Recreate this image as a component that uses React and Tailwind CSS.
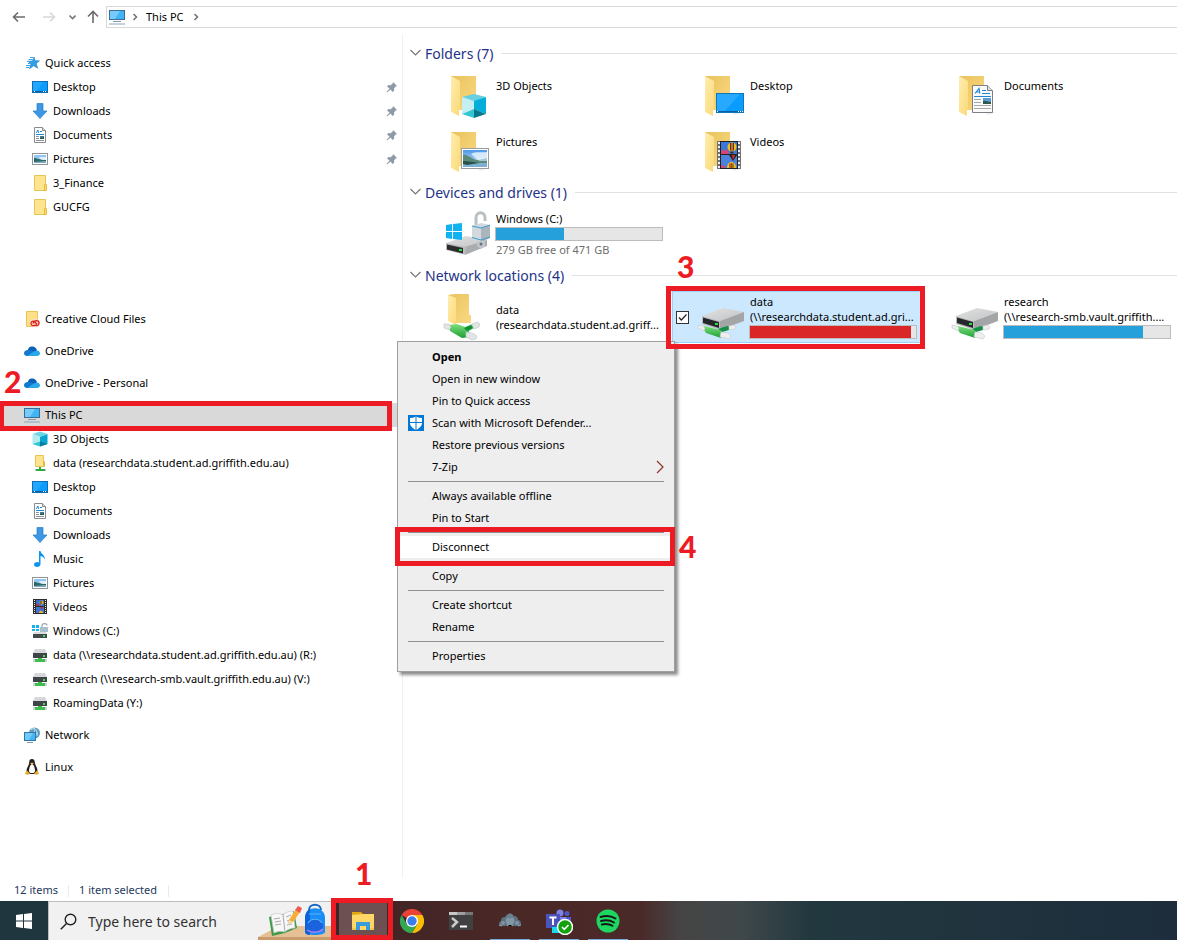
import { useState } from "react";
import clsx from "clsx";

/* -------------------- Small icons (16px) -------------------- */
const Small = ({ children }) => (
  <svg width="16" height="16" viewBox="0 0 16 16" className="shrink-0" aria-hidden="true">
    {children}
  </svg>
);

const StarIcon = () => (
  <Small>
    <path d="M10 2l1.200 3.800h4.300l-3.300 2.700 1.400 4.700-3.900-2.400-4.200 3 1.600-5L4 6.400l4.500-.5z" fill="#2f9fe8" stroke="#1b7fc4" strokeWidth=".6" />
    <path d="M6 2.500h3M4.500 4.500h4M3 6.500h2M4 8.500h3M2 10.500h4M2 12.500h3" stroke="#3aa5ea" />
  </Small>
);

const DesktopIcon = () => (
  <Small>
    <rect x=".5" y="2.500" width="15" height="11" fill="#0a9cff" stroke="#0f6fb5" />
    <path d="M1 3h10L5 12H1z" fill="#35b0ff" opacity=".6" />
    <path d="M1 12.500h14" stroke="#0b5fa0" />
    <path d="M2 12.500h1M11 12.500h1M13 12.500h1" stroke="#fff" />
  </Small>
);

const DownloadIcon = () => (
  <Small>
    <path d="M5 .5h6v7.500h4L8 15.500 1 8h4z" fill="#3c97e4" stroke="#2a7cc4" strokeWidth=".7" />
  </Small>
);

const DocumentIcon = () => (
  <Small>
    <path d="M2.500.5h8l3 3v12h-11z" fill="#fff" stroke="#868b90" />
    <path d="M10.500.5v3h3" fill="#ddd" stroke="#868b90" />
    <path d="M4 6L6 3l.5 3M8 4.500h2M4 7.500h8" stroke="#1f8ad2" fill="none" />
    <path d="M4 9.500h3M4 11.500h3M4 13.500h8" stroke="#8f9499" />
    <rect x="8" y="9" width="4" height="3" fill="#3e78a8" />
    <path d="M8 12v-1l4-1v2z" fill="#325b48" />
  </Small>
);

const PictureIcon = () => (
  <Small>
    <rect x=".5" y="2.500" width="15" height="11" fill="#fff" stroke="#8f9499" />
    <rect x="2" y="4" width="12" height="8" fill="#8fc6f5" />
    <path d="M7 6h7v3H9z" fill="#dff0fb" />
    <path d="M2 7c3 0 5 2 12 2v2H2z" fill="#2e6a64" />
    <path d="M2 11l12-1v2H2z" fill="#7fa9c9" />
  </Small>
);

const FolderIcon = () => (
  <Small>
    <path d="M2.500.5h11v15h-11z" fill="#ffe48f" stroke="#e8c552" />
    <path d="M12.500 9.500h2v6h-2z" fill="#ffdf7d" stroke="#e3bb3f" />
  </Small>
);

const CreativeCloudIcon = () => (
  <Small>
    <path d="M2.500.5h11v15h-11z" fill="#ffe08a" stroke="#e8c552" />
    <rect x="6" y="8" width="10" height="8" rx="4" fill="#fbd9c5" />
    <path d="M11 14c-1 1-4 1-4-1.500S9.500 9.500 11 11l2 2.500M9 12.500c1.500-4 6-3.500 6-.5s-3 3-4 2" fill="none" stroke="#d8201b" strokeWidth="1.300" />
  </Small>
);

const OneDriveIcon = () => (
  <Small>
    <path d="M4 8c-.5-3 2-5 5-4.500 2 .3 3.500 2 4 4L9 11z" fill="#0b5fb4" />
    <path d="M3.500 7C1.500 7 0 8.500 0 10.300S1.500 13 3 13h4l5-4.500C8 8 7 6.500 3.500 7z" fill="#1279d2" />
    <path d="M3 13l7-4.500c4-2.500 6 0 6 1.800S14.500 13 13 13z" fill="#28a8ea" />
  </Small>
);

const PcIcon = () => (
  <Small>
    <rect x=".5" y="1.500" width="15" height="9" fill="#41b4f8" stroke="#3b6d93" />
    <path d="M1 2h10l-5 8H1z" fill="#8ad4fd" opacity=".7" />
    <path d="M4 12.500h8" stroke="#8397ad" />
    <path d="M0 15h16" stroke="#8ea4bf" />
  </Small>
);

const CubeIcon = () => (
  <Small>
    <path d="M8 .5L15.500 3 8 6 .5 3z" fill="#6fd6e4" />
    <path d="M.5 3L8 6v9.500L.5 13z" fill="#b6ecf1" />
    <path d="M15.500 3L8 6v9.500l7.500-2.500z" fill="#06a8d2" />
    <path d="M.5 13L8 10.500v5z" fill="#35c5d4" />
    <path d="M15.500 13L8 10.500v5z" fill="#0b7f99" />
  </Small>
);

const NetFolderIcon = () => (
  <Small>
    <path d="M3.500.5h8v11h-8z" fill="#ffe48f" stroke="#e8c552" />
    <path d="M11.500 6.500h1v5h-1z" stroke="#e3bb3f" fill="none" />
    <path d="M8 12v3M4 15h9" stroke="#2bab3a" strokeWidth="2" />
    <path d="M3 15h1M13 15h1" stroke="#c9c9c9" strokeWidth="2" />
  </Small>
);

const MusicIcon = () => (
  <Small>
    <path d="M7 0h1.500c.5 3 4.500 3.500 4.300 8.500-.8-2-2-3-4.300-3.500v8c0 1.800-1.500 3-3.500 3S2 15 2 13.500 3.500 11 5 11c.8 0 1.500.2 2 .5z" fill="#0c95ee" />
  </Small>
);

const VideoIcon = () => (
  <Small>
    <rect x="1" width="14" height="15" fill="#2d2d2d" />
    <path d="M2.500 1v14M13.500 1v14" stroke="#e8e8e8" strokeDasharray="1 1" />
    <rect x="4" y="1" width="8" height="6" fill="#3b6fd0" />
    <rect x="4" y="8" width="8" height="6" fill="#3f74d4" />
    <circle cx="9.500" cy="3.500" r="2" fill="#e8b21a" />
    <path d="M4 5h3v2H4zM8 8h3l-1 3z" fill="#b8352e" />
    <path d="M7 14c0-3 4-3 4 0z" fill="#f0b420" />
    <path d="M9 2v3" stroke="#3a2a10" />
  </Small>
);

const LockedDriveIcon = () => (
  <Small>
    <path d="M0 2h3v3H0zM4 2h3v3H4zM0 6h3v2H0zM4 6h3v2H4z" fill="#17b0ee" />
    <path d="M10 4.500V2.500c0-2.500 5-2.500 5 0" fill="none" stroke="#9ea6ac" strokeWidth="1.200" />
    <rect x="8" y="4" width="8" height="5" fill="#a8c0d0" />
    <path d="M2 9h12l1 2H1z" fill="#dcdcdc" />
    <rect x="1" y="11" width="14" height="4" fill="#43494d" />
    <rect x="11" y="12" width="2" height="2" fill="#35e04b" />
  </Small>
);

const NetDriveIcon = () => (
  <Small>
    <path d="M3 2h10l2 4H1z" fill="#d6d8da" />
    <rect x="1" y="6" width="14" height="5" fill="#3e4448" />
    <rect x="11" y="8" width="2" height="2" fill="#35e04b" />
    <path d="M6 11h4v1h3v3H3v-3h3z" fill="#3ebd4c" />
    <path d="M1 12h2v3H1zM13 12h2v3h-2z" fill="#d0d3d5" />
  </Small>
);

const NetworkIcon = () => (
  <Small>
    <circle cx="10.500" cy="6" r="5.500" fill="#5c9dbf" />
    <path d="M7 3c3-3 5 0 3 2s2 3 4 1M10 1c3 2 3 4 3 8" stroke="#c6e3ee" fill="none" />
    <rect x=".5" y="5.500" width="11" height="8" fill="#43b5f6" stroke="#2d77a9" />
    <path d="M1 6h8l-4 7H1z" fill="#93d8fd" opacity=".6" />
    <path d="M3 15.500h6" stroke="#8397ad" />
  </Small>
);

const LinuxIcon = () => (
  <Small>
    <path d="M8 0c2 0 2.800 1.500 2.800 3.500 0 2 2.700 5 2.700 8S11 15 8 15s-5.500-1-5.500-3.500 2.700-5.500 2.700-8S6 0 8 0z" fill="#222" />
    <path d="M8 5c1.500 0 3 4.500 3 6.500S10 14 8 14s-3-.5-3-2.500S6.500 5 8 5z" fill="#fff" />
    <path d="M6 4.300l2-.8 2 .8-2 1.200z" fill="#e9b23a" />
    <path d="M1 15l1.500-4 3 3c.5 2-2 2-4.500 1zM15 15l-1.500-4-3 3c-.5 2 2 2 4.500 1z" fill="#e6ab2c" />
  </Small>
);

const PinIcon = () => (
  <svg width="12" height="12" viewBox="0 0 12 12" className="shrink-0" aria-hidden="true">
    <path d="M7 1l4 4-1.300.5-1.700 2 .3 2L6.500 11 4.500 8.500 1 11.500l-.5-.5L3.500 7.500 1 5.500 2.500 4l2 .2L6.700 2.500z" fill="#8e9aa5" />
  </svg>
);

/* -------------------- Large icons (48px) -------------------- */
const Large = ({ children }) => (
  <svg width="48" height="48" viewBox="0 0 48 48" className="shrink-0 overflow-visible" aria-hidden="true">
    <defs>
      <linearGradient id="folderBack" x1="0" y1="0" x2="1" y2="1">
        <stop offset="0" stopColor="#e8c35c" />
        <stop offset="1" stopColor="#fbd983" />
      </linearGradient>
      <linearGradient id="folderFront" x1="0" y1="0" x2="1" y2="1">
        <stop offset="0" stopColor="#ffeeb0" />
        <stop offset="1" stopColor="#fbd976" />
      </linearGradient>
      <linearGradient id="driveTop" x1="0" y1="0" x2="1" y2="1">
        <stop offset="0" stopColor="#e2e2e2" />
        <stop offset="1" stopColor="#c2c3c5" />
      </linearGradient>
      <linearGradient id="plug" x1="0" y1="0" x2="0" y2="1">
        <stop offset="0" stopColor="#7be07c" />
        <stop offset="1" stopColor="#1d9e35" />
      </linearGradient>
      <linearGradient id="sky" x1="0" y1="0" x2="0" y2="1">
        <stop offset="0" stopColor="#4b97ea" />
        <stop offset="1" stopColor="#e4f4fd" />
      </linearGradient>
    </defs>
    {children}
  </svg>
);

const OpenFolder = ({ children }) => (
  <Large>
    <path d="M34 42l11-1-9 3z" fill="#ededed" />
    <path d="M7 5h25v34H15z" fill="url(#folderBack)" />
    <path d="M7 5l9 5v28l-1 1v6l-8-4z" fill="url(#folderFront)" />
    {children}
  </Large>
);

const Folder3d = () => (
  <OpenFolder>
    <path d="M30 23l12 3-12 5-12-5z" fill="#67d0e0" />
    <path d="M18 26l12 4v8l-12 5z" fill="#c4eff3" />
    <path d="M42 26l-12 4v8l12 5z" fill="#04aedb" />
    <path d="M18 43l12-5v9z" fill="#35c5d4" />
    <path d="M42 43l-12-5v9z" fill="#08788c" />
  </OpenFolder>
);

const FolderDesktop = () => (
  <OpenFolder>
    <rect x="18.500" y="22.500" width="27" height="19" fill="#0a9cff" stroke="#1275b8" />
    <path d="M19 23h23L27 40h-8z" fill="#39b2ff" opacity=".6" />
    <path d="M19 40.500h26" stroke="#0b5fa0" />
    <path d="M19 40.500h1M40 40.500h1M42 40.500h1M44 40.500h1" stroke="#fff" />
  </OpenFolder>
);

const FolderDocuments = () => (
  <OpenFolder>
    <path d="M20.500 14.500h15l5 5v22h-20z" fill="#fafafa" stroke="#7c8084" />
    <path d="M35.500 14.500v5h5" fill="#ddd" stroke="#7c8084" />
    <path d="M23 22.500l4-5 .8 5M24.500 21h3.500M30 19.500h4M30 22.500h8" stroke="#2188cf" fill="none" strokeWidth="1.200" />
    <path d="M22 25.500h17" stroke="#2188cf" />
    <path d="M22 28.500h7M22 31.500h7M22 34.500h17M22 37.500h17" stroke="#a5a8ab" />
    <rect x="31" y="27" width="8" height="6" fill="#5b9bd8" />
    <path d="M31 30c3-1 5 1 8 1v2h-8z" fill="#30574b" />
  </OpenFolder>
);

const FolderPictures = () => (
  <OpenFolder>
    <rect x="17.500" y="21.500" width="27" height="20" fill="#fff" stroke="#9a9da0" />
    <rect x="19" y="23" width="24" height="17" fill="url(#sky)" />
    <path d="M27 27c5-3 10-1 16-2v7l-9 1z" fill="#eef7fd" opacity=".8" />
    <path d="M19 28c5-1 8 4 14 5 4 1 7 0 10 1v2H19z" fill="#5b8b78" />
    <path d="M35 33l8-2v3h-8z" fill="#a9c6d6" />
    <path d="M19 36h24v4H19z" fill="#7fb0d2" />
    <path d="M19 34c6 0 10 1 16 2l-12 2-4-1z" fill="#28504a" />
  </OpenFolder>
);

const FolderVideos = () => (
  <OpenFolder>
    <rect x="19" y="14" width="24" height="28" fill="#737373" />
    <path d="M21 15v27M41 15v27" stroke="#f0f0f0" strokeWidth="2" strokeDasharray="2 2" />
    <rect x="22" y="14" width="18" height="28" fill="#222" />
    <rect x="23" y="15" width="16" height="12" fill="#3d78d8" />
    <rect x="23" y="28" width="16" height="13" fill="#4a82dc" />
    <circle cx="34" cy="20" r="4.500" fill="#f0c022" />
    <path d="M32.500 16v7.500M35.500 16v7.500" stroke="#3b2a1a" strokeWidth=".9" />
    <path d="M34 16v8" stroke="#c8312b" strokeWidth="1.200" />
    <path d="M32.500 24.500h3v2h-3z" fill="#3b2a1a" />
    <path d="M23 25l2-3 2 2 2-2 2 4v1h-8z" fill="#d34678" />
    <path d="M31 28h8l-4 6z" fill="#2b2320" />
    <path d="M34 28h3l-2 5z" fill="#d62d30" />
    <path d="M29 41c0-8 9-8 9 0z" fill="#f0c022" />
    <path d="M32 36.500V41M35 36.500V41" stroke="#3b2a1a" strokeWidth=".9" />
    <path d="M33.500 36v5" stroke="#c8312b" strokeWidth="1.200" />
    <path d="M23 38l4 1v2h-4z" fill="#d34678" />
  </OpenFolder>
);

const WindowsDrive = () => (
  <Large>
    <path d="M2 33l20-7 21 4-20 8z" fill="url(#driveTop)" />
    <path d="M21 37l22-7v6L21 45z" fill="#aaadb0" />
    <path d="M2 33l20 4v8L2 40z" fill="#b9babc" />
    <path d="M3 34.500L19 38v5.500L3 39.500z" fill="#2a2c2e" />
    <rect x="15" y="39" width="3" height="2" fill="#31d83e" />
    <path d="M2 15l6-1v7H2zM9 14l9-1v8H9zM2 22h6v7l-6-1zM9 22h9v8l-9-1z" fill="#12b2f2" />
    <path d="M32 17V8c0-7 9-7 9 0v3" fill="none" stroke="#b9c0c4" strokeWidth="3" />
    <path d="M28 16l9-3 9 2v13l-9 4-9-3z" fill="#d2d8dc" />
    <path d="M37 18v14l9-4V15z" fill="#abb5bc" />
    <path d="M28 16l9 2 9-3M28 27.500l9 2.500 9-3" stroke="#3d9bd0" fill="none" />
    <path d="M33 31h8v5l-4 3-4-3z" fill="#c0c6ca" />
    <circle cx="37" cy="34" r="1.500" fill="#6a7277" />
  </Large>
);

const NetFolder = () => (
  <Large>
    <path d="M4 2l6-1h15v20l2 2v7H10z" fill="url(#folderBack)" />
    <path d="M4 2l8 3v27l-8-4z" fill="url(#folderFront)" />
    <path d="M5 32l8-1 8 3 7-3 2 4-5 3v6l-7 1-12-7z" fill="url(#plug)" />
    <path d="M20 35l7-3 2 3-6 3z" fill="#0f8f36" />
    <path d="M0 31l5 0 2 3-2 3-5-2zM28 31l5-2 3 2-1 3-5 2zM22 39l6 1 5 3-1 3-4 1-6-3z" fill="#e2e5e6" stroke="#bfc2c4" strokeWidth=".6" />
  </Large>
);

const NetDrive = () => (
  <Large>
    <path d="M4 23l21-8 21 4-24 9z" fill="url(#driveTop)" />
    <path d="M22 28l24-9v9L22 37z" fill="#a4a5a7" />
    <path d="M4 23l18 5v9L4 31z" fill="#bbbcbe" />
    <path d="M5 24.500L21 29v6L5 30z" fill="#25282a" />
    <rect x="17" y="30" width="3" height="2" fill="#31d83e" />
    <path d="M20 36l9-3 4 1-2 3-7 2z" fill="#158f45" />
    <path d="M6 33l16 4 2 2-1 6-15-5-2-3z" fill="url(#plug)" />
    <path d="M0 32l5 1 2 2-1 3-6-3zM31 33l5-1 2 2-1 2-6 1zM23 39l7 1 3 3-2 3-9-2z" fill="#eceeef" stroke="#c6c9ca" strokeWidth=".6" />
  </Large>
);

/* -------------------- Taskbar icons -------------------- */
const ExplorerIcon = () => (
  <svg width="24" height="24" viewBox="0 0 24 24" aria-hidden="true">
    <path d="M1 3h9l2 2v3H1z" fill="#e2a60f" />
    <path d="M1 6l11-1h11v16H1z" fill="#ffd766" />
    <path d="M5 13h14v8h-4v-4H9v4H5z" fill="#3a9bdd" />
    <path d="M1 19h4v2H1zM19 19h4v2h-4z" fill="#f4c650" />
  </svg>
);

const ChromeIcon = () => (
  <svg width="24" height="24" viewBox="0 0 24 24" aria-hidden="true">
    <path d="M12 12L1.600 6A12 12 0 0 1 22.400 6z" fill="#ea4335" />
    <path d="M12 6h10.400A12 12 0 0 1 12 24l5.200-9z" fill="#fbbc05" />
    <path d="M1.600 6L6.800 15l5.200 3-2 6A12 12 0 0 1 1.600 6z" fill="#34a853" />
    <path d="M17.200 15L12 24a12 12 0 0 1-4-.7L12 17z" fill="#34a853" />
    <circle cx="12" cy="12" r="6" fill="#fff" />
    <circle cx="12" cy="12" r="4.700" fill="#3b7ded" />
  </svg>
);

const TerminalIcon = () => (
  <svg width="24" height="24" viewBox="0 0 24 24" aria-hidden="true">
    <rect y="3" width="24" height="18" fill="#414141" />
    <path d="M0 3h8v3H0z" fill="#c9c9c9" />
    <path d="M8 3h8v3H8z" fill="#a0a0a0" />
    <path d="M16 3h8v3h-8z" fill="#767676" />
    <path d="M3 9l5 4-5 5" fill="none" stroke="#ccc" strokeWidth="2.500" />
    <path d="M11 17.500h7" stroke="#fff" strokeWidth="2" />
  </svg>
);

const CloudIcon = () => (
  <svg width="24" height="24" viewBox="0 0 24 24" aria-hidden="true">
    <path d="M2 17a3 3 0 0 1 1-5 3.500 3.500 0 0 1 4-4 5 5 0 0 1 9-1 4 4 0 0 1 4 4c3 0 4 4 2 6z" fill="#5c7080" />
    <circle cx="12" cy="12" r="4.500" fill="#8197a6" />
    <circle cx="12" cy="7" r="2.500" fill="#6a8090" />
    <circle cx="5" cy="14" r="2" fill="#7e94a3" />
    <circle cx="19" cy="14" r="2" fill="#7e94a3" />
    <path d="M1 16l3 1M9 17l3-2 3 2M20 17l3-1" stroke="#93a7b4" />
  </svg>
);

const TeamsIcon = () => (
  <svg width="28" height="28" viewBox="0 0 28 28" aria-hidden="true">
    <circle cx="15" cy="6" r="3.500" fill="#7b83eb" />
    <circle cx="22" cy="6.500" r="2.500" fill="#5059c9" />
    <path d="M17 10h9v6a4 4 0 0 1-8 1z" fill="#5059c9" />
    <path d="M9 10h12v9a6 6 0 0 1-12 0z" fill="#7b83eb" />
    <rect x="1" y="7" width="14" height="14" fill="#4b53bc" />
    <path d="M4.500 10.500h7M8 10.500V18" stroke="#fff" strokeWidth="2" />
    <rect x="7" y="20" width="8" height="6" fill="#18d8ea" />
    <circle cx="20" cy="20" r="7.500" fill="#13a10e" stroke="#fff" strokeWidth="1.500" />
    <path d="M17 20l2.300 2.300L23.500 18" fill="none" stroke="#fff" strokeWidth="1.600" />
  </svg>
);

const SpotifyIcon = () => (
  <svg width="24" height="24" viewBox="0 0 24 24" aria-hidden="true">
    <circle cx="12" cy="12" r="11.500" fill="#1ed760" />
    <path d="M4.500 8c5-1.500 11-1 15 1.500M5 12c4.500-1.200 9.500-.6 13 1.500M5.800 15.500c3.700-1 7.700-.5 10.700 1.300" fill="none" stroke="#161616" strokeWidth="1.900" strokeLinecap="round" />
  </svg>
);

const StudyArt = () => (
  <svg width="74" height="38" viewBox="0 0 74 38" className="shrink-0" aria-hidden="true">
    <path d="M0 35L21 24h53v14H0z" fill="#e5bf95" />
    <path d="M0 35h74v3H0z" fill="#c99b6c" />
    <path d="M11 15l14-3 11-3 3 17-12 5-13 3z" fill="#3f9b45" />
    <path d="M13 13c5-2 8-2 12 0 3-3 6-4 10-4l2 17c-4 0-7 1-10 4-4-1-7-1-11 1z" fill="#f7f7f5" stroke="#c9c7d5" strokeWidth=".7" />
    <path d="M25 13l2 17M16 17l6-1M17 20l6-1M17 23l6-1M28 15l5-2M29 19l5-2M29 23l5-1" stroke="#aaa8b5" />
    <path d="M31 18l7-11 4 3-7 10-5 2z" fill="#f8ae33" />
    <path d="M31 18l4 2-5 3z" fill="#f4d9b0" />
    <path d="M37 8l3-4 4 2-2 5z" fill="#ee5a52" />
    <path d="M51 8c0-7 12-7 12 0" fill="none" stroke="#1567c5" strokeWidth="2" />
    <path d="M47 16c0-13 20-13 20 0v14c0 4-20 4-20 0z" fill="#1a8cf5" />
    <path d="M47 16c0-4 2-8 5-9v26c-3 0-5-1-5-3z" fill="#0c62d6" />
    <path d="M49 23c1-8 15-8 16 0v5c-3 3-13 3-16 0z" fill="#1a63dd" />
    <path d="M51 12h12M50 21c3-5 11-5 14 0" stroke="#55b4ff" strokeWidth="1.200" fill="none" />
    <path d="M49 28c4 3 12 3 16-1" stroke="#b07cf5" strokeWidth="1.500" fill="none" />
  </svg>
);

/* -------------------- Data -------------------- */
const quickAccess = [
  { label: "Desktop", Icon: DesktopIcon, pinned: true },
  { label: "Downloads", Icon: DownloadIcon, pinned: true },
  { label: "Documents", Icon: DocumentIcon, pinned: true },
  { label: "Pictures", Icon: PictureIcon, pinned: true },
  { label: "3_Finance", Icon: FolderIcon },
  { label: "GUCFG", Icon: FolderIcon },
];

const thisPc = [
  { label: "3D Objects", Icon: CubeIcon },
  { label: "data (researchdata.student.ad.griffith.edu.au)", Icon: NetFolderIcon },
  { label: "Desktop", Icon: DesktopIcon },
  { label: "Documents", Icon: DocumentIcon },
  { label: "Downloads", Icon: DownloadIcon },
  { label: "Music", Icon: MusicIcon },
  { label: "Pictures", Icon: PictureIcon },
  { label: "Videos", Icon: VideoIcon },
  { label: "Windows (C:)", Icon: LockedDriveIcon },
  { label: "data (\\\\researchdata.student.ad.griffith.edu.au) (R:)", Icon: NetDriveIcon },
  { label: "research (\\\\research-smb.vault.griffith.edu.au) (V:)", Icon: NetDriveIcon },
  { label: "RoamingData (Y:)", Icon: NetDriveIcon },
];

const folders = [
  { label: "3D Objects", Icon: Folder3d },
  { label: "Desktop", Icon: FolderDesktop },
  { label: "Documents", Icon: FolderDocuments },
  { label: "Pictures", Icon: FolderPictures },
  { label: "Videos", Icon: FolderVideos },
];

const menuGroups = [
  ["Open", "Open in new window", "Pin to Quick access", "Scan with Microsoft Defender...", "Restore previous versions", "7-Zip"],
  ["Always available offline", "Pin to Start"],
  ["Disconnect"],
  ["Copy"],
  ["Create shortcut", "Rename"],
  ["Properties"],
];

const apps = [
  { label: "File Explorer", Icon: ExplorerIcon, active: true },
  { label: "Chrome", Icon: ChromeIcon },
  { label: "Terminal", Icon: TerminalIcon },
  { label: "ownCloud", Icon: CloudIcon, running: true },
  { label: "Teams", Icon: TeamsIcon, running: true },
  { label: "Spotify", Icon: SpotifyIcon, running: true },
];

/* Numbered steps drawn over the window */
const steps = [
  { n: 1, box: "left-[331px] top-[898px] w-[62px] h-[42px]", text: "left-[355px] top-[855px]" },
  { n: 2, box: "-left-px top-[401px] w-[393px] h-[30px]", text: "left-1 top-[363px]" },
  { n: 3, box: "left-[666px] top-[286px] w-[259px] h-[63px]", text: "left-[677px] top-[248px]" },
  { n: 4, box: "left-[395px] top-[527px] w-[280px] h-[39px]", text: "left-[679px] top-[528px]" },
];

/* -------------------- Pieces -------------------- */
function TreeRow({ label, Icon, child, pinned, selected }) {
  return (
    <button
      type="button"
      className={clsx(
        "flex h-6 w-full items-center gap-[5px] text-left whitespace-nowrap",
        child ? "pl-8" : "pl-6",
        selected && "bg-[#d9d9d9]"
      )}
    >
      <Icon />
      <span className="flex-1">{label}</span>
      {pinned && <PinIcon />}
    </button>
  );
}

function Section({ title, children }) {
  return (
    <section className="mb-[3px]">
      <h2 className="mb-1 flex h-6 items-center text-[14px] text-[#1e3287]">
        <svg width="12" height="8" viewBox="0 0 12 8" className="mr-[3px]" aria-hidden="true">
          <path d="M.5 1l5 5 5-5" fill="none" stroke="#777" strokeWidth="1.200" />
        </svg>
        {title}
        <span className="ml-2 h-px flex-1 bg-[#e2e2e2]" />
      </h2>
      <div className="grid grid-cols-[repeat(auto-fill,250px)] gap-1 pl-2">{children}</div>
    </section>
  );
}

function UsageBar({ percent, full }) {
  return (
    <div className="mt-px mb-px -ml-px h-[14px] w-[168px] border border-[#bcbcbc] bg-[#e6e6e6]">
      <div
        className={clsx("h-full", full ? "bg-[#da2626]" : "bg-[#26a0da]")}
        style={{ width: `${percent}%` }}
      />
    </div>
  );
}

function Tile({ Icon, selected, top, check, children }) {
  return (
    <div
      className={clsx(
        "flex h-[52px] border leading-[15px] whitespace-nowrap",
        top ? "items-start" : "items-center",
        selected ? "border-[#99d1ff] bg-[#cce8ff]" : "border-transparent"
      )}
    >
      <div className="flex w-[25px] shrink-0 items-center self-center pl-[3px]">{check}</div>
      <div className="self-center">
        <Icon />
      </div>
      <div className={clsx("ml-1", top && "pt-2")}>{children}</div>
    </div>
  );
}

function ContextMenu() {
  return (
    <div
      role="menu"
      className="absolute top-[341px] left-[397px] w-[278px] border border-[#a0a0a0] bg-[#eee] px-[2px] py-1 shadow-[3px_3px_3px_rgba(0,0,0,0.45)]"
    >
      {menuGroups.map((group, i) => (
        <div key={group[0]}>
          {i > 0 && <hr className="mx-2 my-[3px] border-[#919191]" />}
          {group.map((item) => (
            <button
              key={item}
              type="button"
              role="menuitem"
              className={clsx(
                "flex h-[22px] w-full items-center px-2 text-left",
                item === "Open" && "font-bold",
                item === "Disconnect" && "bg-white"
              )}
            >
              <span className="w-6 shrink-0">
                {item.startsWith("Scan") && (
                  <Small>
                    <rect width="16" height="16" fill="#0078d7" />
                    <path d="M8 1.500c2 1 4 1.500 6 1.500v5c0 3-3 5.500-6 7-3-1.500-6-4-6-7V3c2 0 4-.5 6-1.500z" fill="#fff" />
                    <path d="M8 1v14M2 7.500h12" stroke="#0078d7" />
                  </Small>
                )}
              </span>
              <span className="flex-1">{item}</span>
              {item === "7-Zip" && (
                <svg width="8" height="14" viewBox="0 0 8 14" aria-hidden="true">
                  <path d="M1 1l6 6-6 6" fill="none" stroke="#8a3324" strokeWidth="1.200" />
                </svg>
              )}
            </button>
          ))}
        </div>
      ))}
    </div>
  );
}

function AddressBar() {
  return (
    <header className="flex h-[34px] items-center">
      <button type="button" aria-label="Back" className="ml-3">
        <svg width="14" height="12" viewBox="0 0 14 12">
          <path d="M13 6H1.500M6 1.500L1.500 6 6 10.500" fill="none" stroke="#6b6b6b" strokeWidth="1.600" />
        </svg>
      </button>
      <button type="button" aria-label="Forward" className="ml-4">
        <svg width="14" height="12" viewBox="0 0 14 12">
          <path d="M1 6h11.500M8 1.500L12.500 6 8 10.500" fill="none" stroke="#d8d8d8" strokeWidth="1.600" />
        </svg>
      </button>
      <button type="button" aria-label="Recent locations" className="ml-3">
        <svg width="8" height="6" viewBox="0 0 8 6">
          <path d="M1.500 1.500L4.500 4.500l3-3" fill="none" stroke="#777" strokeWidth="1.600" />
        </svg>
      </button>
      <button type="button" aria-label="Up" className="ml-[10px]">
        <svg width="14" height="14" viewBox="0 0 14 14">
          <path d="M7 13V1.500M2 6.500l5-5 5 5" fill="none" stroke="#6b6b6b" strokeWidth="1.600" />
        </svg>
      </button>
      <div className="ml-[6px] flex h-[22px] flex-1 items-center border border-r-0 border-[#d9d9d9] pl-[2px]">
        <PcIcon />
        <svg width="6" height="8" viewBox="0 0 6 8" className="mx-[7px]" aria-hidden="true">
          <path d="M1.500 1L4.500 4l-3 3" fill="none" stroke="#707070" strokeWidth="1.500" />
        </svg>
        <button type="button" className="pl-px">This PC</button>
        <svg width="6" height="8" viewBox="0 0 6 8" className="ml-[9px]" aria-hidden="true">
          <path d="M1.500 1L4.500 4l-3 3" fill="none" stroke="#707070" strokeWidth="1.500" />
        </svg>
      </div>
    </header>
  );
}

function Taskbar() {
  return (
    <footer className="flex h-[39px] bg-[linear-gradient(90deg,#20363f_0px,#20363f_48px,#3f2325_332px,#4a2826_520px,#4a2929_640px,#464444_680px,#40484b_740px,#22383f_810px,#1d2d3c_1177px)]">
      <button type="button" aria-label="Start" className="flex w-12 items-center justify-center">
        <svg width="16" height="16" viewBox="0 0 16 16">
          <path d="M0 2l7-1v6.500H0zM8 1l8-1v7.500H8zM0 8.500h7V15l-7-1zM8 8.500h8V16l-8-1z" fill="#fff" />
        </svg>
      </button>
      <div className="flex w-[284px] items-center border-t border-l border-[#bdbdbd] bg-[#f1f1f1] pl-[11px]">
        <svg width="17" height="17" viewBox="0 0 17 17" className="shrink-0" aria-hidden="true">
          <circle cx="10.500" cy="6.500" r="5.300" fill="none" stroke="#222" strokeWidth="1.400" />
          <path d="M6.500 10.500L.8 16.300" stroke="#222" strokeWidth="1.500" />
        </svg>
        <input
          type="text"
          aria-label="Search"
          placeholder="Type here to search"
          className="ml-[11px] min-w-0 flex-1 bg-transparent text-[14px] text-[#333] outline-none placeholder:text-[#333]"
        />
        <StudyArt />
      </div>
      <div className="ml-[7px] flex gap-px">
        {apps.map(({ label, Icon, active, running }) => (
          <button
            key={label}
            type="button"
            aria-label={label}
            className={clsx(
              "flex w-12 items-center justify-center",
              active && "bg-[#6d5152]",
              running && "bg-[linear-gradient(#76a9dc,#76a9dc)] bg-[length:40px_1px] bg-bottom bg-no-repeat"
            )}
          >
            <Icon />
          </button>
        ))}
      </div>
    </footer>
  );
}

export default function App() {
  const [checked, setChecked] = useState(true);

  return (
    <div className="relative flex min-h-screen flex-col overflow-hidden bg-white font-['Noto_Sans',sans-serif] text-[11px] text-black">
      <AddressBar />

      <div className="flex flex-1">
        <nav className="w-[403px] shrink-0 border-r border-[#f0f0f0] pt-[17px] pr-1">
          <TreeRow label="Quick access" Icon={StarIcon} />
          {quickAccess.map((row) => (
            <TreeRow key={row.label} child {...row} />
          ))}
          <div className="mt-[88px] flex flex-col gap-2">
            <TreeRow label="Creative Cloud Files" Icon={CreativeCloudIcon} />
            <TreeRow label="OneDrive" Icon={OneDriveIcon} />
            <TreeRow label="OneDrive - Personal" Icon={OneDriveIcon} />
            <div>
              <TreeRow label="This PC" Icon={PcIcon} selected />
              {thisPc.map((row) => (
                <TreeRow key={row.label} child {...row} />
              ))}
            </div>
            <TreeRow label="Network" Icon={NetworkIcon} />
            <TreeRow label="Linux" Icon={LinuxIcon} />
          </div>
        </nav>

        <main className="min-w-0 flex-1 pt-[7px] pl-[7px]">
          <Section title="Folders (7)">
            {folders.map(({ label, Icon }) => (
              <Tile key={label} Icon={Icon} top>
                {label}
              </Tile>
            ))}
          </Section>

          <Section title="Devices and drives (1)">
            <Tile Icon={WindowsDrive}>
              <p>Windows (C:)</p>
              <UsageBar percent={41} />
              <p className="text-[#6d6d6d]">279 GB free of 471 GB</p>
            </Tile>
          </Section>

          <Section title="Network locations (4)">
            <Tile Icon={NetFolder}>
              <p>data</p>
              <p>(researchdata.student.ad.griff...</p>
            </Tile>
            <Tile
              Icon={NetDrive}
              selected
              check={
                <label className="relative flex">
                  <input
                    type="checkbox"
                    aria-label="Select data"
                    checked={checked}
                    onChange={(e) => setChecked(e.target.checked)}
                    className="size-[13px] appearance-none border border-[#333] bg-white"
                  />
                  {checked && (
                    <svg width="13" height="13" viewBox="0 0 13 13" className="pointer-events-none absolute inset-0">
                      <path d="M3 6.500L5.300 9 10.500 3.500" fill="none" stroke="#222" strokeWidth="1.200" />
                    </svg>
                  )}
                </label>
              }
            >
              <p>data</p>
              <p>{"(\\\\researchdata.student.ad.gri..."}</p>
              <UsageBar percent={97} full />
            </Tile>
            <Tile Icon={NetDrive}>
              <p>research</p>
              <p>{"(\\\\research-smb.vault.griffith...."}</p>
              <UsageBar percent={84} />
            </Tile>
          </Section>
        </main>
      </div>

      <div className="flex h-[23px] items-center pt-[2px] pl-[14px] text-[#1e395b]">
        <span className="w-[54px]">12 items</span>
        <span className="flex h-3 w-[101px] items-center border-x border-[#eaeaea] pl-[10px] whitespace-nowrap">
          1 item selected
        </span>
      </div>

      <Taskbar />

      <ContextMenu />

      {steps.map(({ n, box, text }) => (
        <div key={n} className="pointer-events-none">
          <div className={clsx("absolute border-[5px] border-[#ed1c24]", box)} />
          <span className={clsx("absolute font-['Lato',sans-serif] text-[30px] leading-9 font-black text-[#ed1c24]", text)}>
            {n}
          </span>
        </div>
      ))}
    </div>
  );
}
